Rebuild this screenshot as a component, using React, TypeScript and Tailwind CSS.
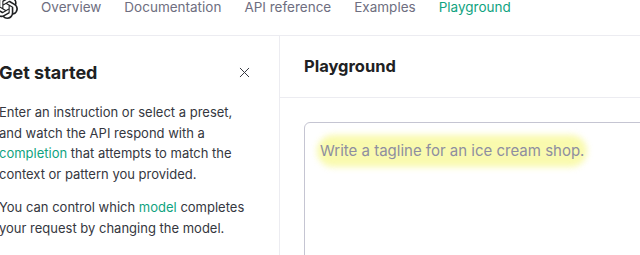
import { X } from 'lucide-react';

// --- nav items across the top bar ---
const navItems = [
  { label: 'Overview', active: false },
  { label: 'Documentation', active: false },
  { label: 'API reference', active: false },
  { label: 'Examples', active: false },
  { label: 'Playground', active: true },
];

function Logo() {
  return (
    <svg viewBox="0 0 24 24" className="w-[24px] h-[24px] shrink-0 fill-[#202123]">
      <path d="M22.2819 9.8211a5.9847 5.9847 0 0 0-.5157-4.9108 6.0462 6.0462 0 0 0-6.5098-2.9A6.0651 6.0651 0 0 0 4.9807 4.1818a5.9847 5.9847 0 0 0-3.9977 2.9 6.0462 6.0462 0 0 0 .7427 7.0966 5.98 5.98 0 0 0 .511 4.9107 6.051 6.051 0 0 0 6.5146 2.9001A5.9847 5.9847 0 0 0 13.2599 24a6.0557 6.0557 0 0 0 5.7718-4.2058 5.9894 5.9894 0 0 0 3.9977-2.9001 6.0557 6.0557 0 0 0-.7475-7.0729zm-9.022 12.6081a4.4755 4.4755 0 0 1-2.8764-1.0408l.1419-.0804 4.7783-2.7582a.7948.7948 0 0 0 .3927-.6813v-6.7369l2.02 1.1686a.071.071 0 0 1 .038.052v5.5826a4.504 4.504 0 0 1-4.4945 4.4944zm-9.6607-4.1254a4.4708 4.4708 0 0 1-.5346-3.0137l.142.0852 4.783 2.7582a.7712.7712 0 0 0 .7806 0l5.8428-3.3685v2.3324a.0804.0804 0 0 1-.0332.0615L9.74 19.9502a4.4992 4.4992 0 0 1-6.1408-1.6464zM2.3408 7.8956a4.485 4.485 0 0 1 2.3655-1.9728V11.6a.7664.7664 0 0 0 .3879.6765l5.8144 3.3543-2.0201 1.1685a.0757.0757 0 0 1-.071 0l-4.8303-2.7865A4.504 4.504 0 0 1 2.3408 7.872zm16.5963 3.8558L13.1038 8.364 15.1192 7.2a.0757.0757 0 0 1 .071 0l4.8303 2.7913a4.4944 4.4944 0 0 1-.6765 8.1042v-5.6772a.79.79 0 0 0-.407-.667zm2.0107-3.0231l-.142-.0852-4.7735-2.7818a.7759.7759 0 0 0-.7854 0L9.409 9.2297V6.8974a.0662.0662 0 0 1 .0284-.0615l4.8303-2.7866a4.4992 4.4992 0 0 1 6.6802 4.66zM8.3065 12.863l-2.02-1.1638a.0804.0804 0 0 1-.038-.0567V6.0742a4.4992 4.4992 0 0 1 7.3757-3.4537l-.142.0805L8.704 5.459a.7948.7948 0 0 0-.3927.6813zm1.0976-2.3654l2.602-1.4998 2.6069 1.4998v2.9994l-2.5974 1.4997-2.6067-1.4997Z" />
    </svg>
  );
}

export default function App() {
  return (
    <div className="w-[640px] h-[255px] overflow-hidden bg-white font-['Inter',sans-serif]">
      {/* --- top nav --- */}
      <header className="h-[36px] border-b border-[#ececf1]">
        <div className="h-[14px] flex items-center gap-[23px] -ml-[6px]">
          <Logo />
          <nav className="flex items-center gap-[23px] text-[13.5px] leading-[16px]">
            {navItems.map((item) => (
              <span key={item.label} className={item.active ? 'text-[#10a37f]' : 'text-[#6e6e80]'}>
                {item.label}
              </span>
            ))}
          </nav>
        </div>
      </header>

      <main className="flex h-[219px]">
        {/* --- sidebar --- */}
        <aside className="w-[281px] shrink-0 border-r border-[#ececf1] pr-[26px] -ml-[1px]">
          <div className="flex items-center justify-between h-[36px] mt-[18px]">
            <h2 className="text-[18px] font-bold text-[#202123]">Get started</h2>
            <X size={17} strokeWidth={1.4} className="text-[#353740]" />
          </div>
          <div className="mt-[12px] text-[13px] leading-[20.5px] text-[#353740] whitespace-nowrap">
            <p>
              Enter an instruction or select a preset,
              <br />
              and watch the API respond with a
              <br />
              <span className="text-[#10a37f]">completion</span> that attempts to match the
              <br />
              context or pattern you provided.
            </p>
            <p className="mt-[13px]">
              You can control which <span className="text-[#10a37f]">model</span> completes
              <br />
              your request by changing the model.
            </p>
          </div>
        </aside>

        {/* --- playground panel --- */}
        <section className="flex-1 min-w-0">
          <div className="h-[62px] border-b border-[#ececf1] px-[24px] flex items-center">
            <h1 className="text-[16.5px] font-bold text-[#202123]">Playground</h1>
          </div>
          <div className="pl-[24px] pt-[24px]">
            <div className="w-[400px] h-[200px] border border-[#c5c5d2] rounded-tl-[6px] px-[15px] pt-[15px]">
              <span className="relative inline-block text-[15px] leading-[20px] text-[#8e8ea0]">
                <span className="absolute -inset-x-[3px] -inset-y-[6px] bg-[#f8f99a] blur-[3px] rounded-full opacity-80" />
                <span className="relative">Write a tagline for an ice cream shop.</span>
              </span>
            </div>
          </div>
        </section>
      </main>
    </div>
  );
}
